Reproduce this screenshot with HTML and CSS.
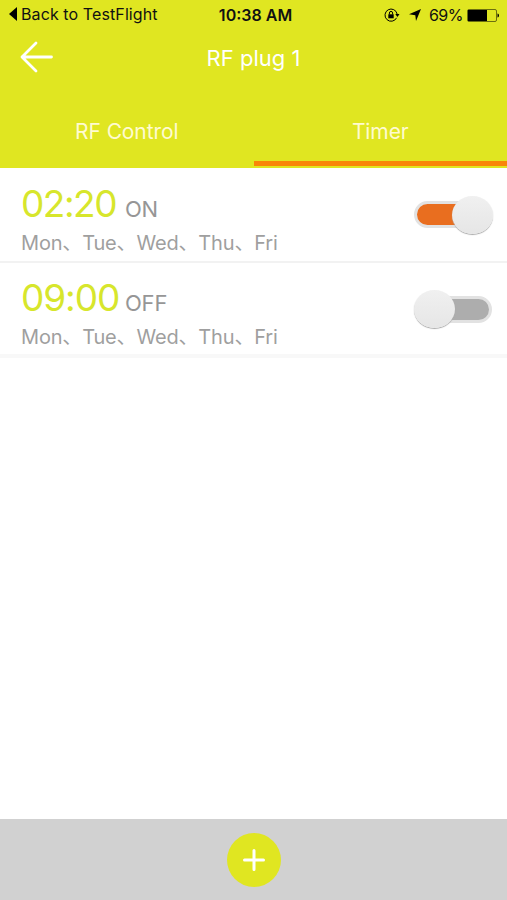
FILE: index.html
```html
<!DOCTYPE html>
<html lang="en">
<head>
    <meta charset="UTF-8">
    <meta name="viewport" content="width=device-width, initial-scale=1.0">
    <title>RF plug 1</title>
    <link rel="stylesheet" href="styles.css">
</head>
<body>
    <header>
        <div class="status">
            <div class="status-left">
                <svg width="8" height="14" viewBox="0 0 8 14"><path d="M8 0v14L0 7z"/></svg>
                <span class="back-app">Back to TestFlight</span>
            </div>
            <span class="clock">10:38 AM</span>
            <div class="status-right">
                <svg class="lock" width="16" height="14" viewBox="0 0 16 14">
                    <path d="M12.6 9.8A6.1 6.1 0 1 1 13.1 6" fill="none" stroke="#000" stroke-width="1"/>
                    <path d="M11.3 6h4.2l-2.1 2.9z"/>
                    <path d="M4.3 6.3h5.4v4H4.3z"/>
                    <path d="M5.4 6.5V5a1.6 1.6 0 0 1 3.2 0v1.5" fill="none" stroke="#000" stroke-width="1"/>
                </svg>
                <svg class="location" width="12" height="12" viewBox="0 0 12 12"><path d="M12 0L7 12L6.3 6.2L0 5.3z"/></svg>
                <span class="percent">69%</span>
                <svg width="33" height="13" viewBox="0 0 33 13">
                    <rect x=".5" y=".5" width="29" height="12" rx="1.5" fill="none" stroke="#000" stroke-opacity=".65" stroke-width=".8"/>
                    <path d="M1 1h19v11H1z"/>
                    <path d="M30.5 4.5c2 .3 2 3.7 0 4z"/>
                </svg>
            </div>
        </div>
        <div class="navbar">
            <svg class="back" width="34" height="32" viewBox="0 0 34 32"><path d="M31.5 16H2M16 2L2 16l14 14" fill="none" stroke="#fff" stroke-width="2.8" stroke-linecap="round" stroke-linejoin="round"/></svg>
            <h1>RF plug 1</h1>
        </div>
        <nav class="tabs">
            <div class="tab control">RF Control</div>
            <div class="tab active">Timer</div>
        </nav>
    </header>

    <main>
        <div class="timer">
            <div class="info">
                <p class="time-row"><span class="time on-time">02:20</span><span class="state">ON</span></p>
                <p class="days">Mon、Tue、Wed、Thu、Fri</p>
            </div>
            <div class="switch on"><div class="track"></div><div class="knob"></div></div>
        </div>
        <div class="timer last">
            <div class="info">
                <p class="time-row"><span class="time off-time">09:00</span><span class="state">OFF</span></p>
                <p class="days">Mon、Tue、Wed、Thu、Fri</p>
            </div>
            <div class="switch"><div class="track"></div><div class="knob"></div></div>
        </div>
    </main>

    <footer>
        <div class="add">
            <svg width="22" height="22" viewBox="0 0 22 22"><path d="M11 1.5v19M1.5 11h19" stroke="#fff" stroke-width="3" stroke-linecap="round"/></svg>
        </div>
    </footer>
</body>
</html>
```

FILE: styles.css
```css
* {
    box-sizing: border-box;
}
body {
    display: flex;
    flex-direction: column;
    height: 900px;
    margin: 0;
    background: #fff;
    font-family: Inter, "Noto Sans CJK SC", sans-serif;
    overflow: hidden;
}
svg {
    display: block;
    flex: none;
}
h1, p {
    margin: 0;
    font-weight: 400;
}
header {
    height: 168px;
    background: #e0e621;
    color: #fff;
}
.status {
    display: grid;
    grid-template-columns: 1fr auto 1fr;
    align-items: center;
    height: 30px;
    padding: 0 7px 0 9px;
    color: #111;
    font-size: 16px;
    line-height: 30px;
    white-space: nowrap;
}
.status-left, .status-right {
    display: flex;
    align-items: center;
}
.status-left {
    gap: 4px;
    margin-top: -2px;
}
.status-right {
    justify-content: flex-end;
}
.back-app {
    letter-spacing: 0.1px;
}
.clock {
    padding-left: 2px;
    font-weight: 600;
}
.location {
    margin: 0 8px 0 9px;
}
.percent {
    margin-right: 4px;
    font-size: 16px;
    letter-spacing: -0.5px;
}
.navbar {
    display: grid;
    grid-template-columns: 1fr auto 1fr;
    align-items: center;
    height: 54px;
    padding: 0 20px;
}
h1 {
    font-size: 22px;
    line-height: 30px;
    padding-top: 2px;
}
.tabs {
    display: flex;
    height: 84px;
}
.tab {
    flex: 1;
    height: 82px;
    padding-top: 33px;
    font-size: 21px;
    letter-spacing: -0.1px;
    line-height: 30px;
    text-align: center;
    color: #fffbd0;
}
.active {
    border-bottom: 5px solid #f98508;
}
main {
    flex: 1;
}
.timer {
    display: flex;
    justify-content: space-between;
    height: 95px;
    padding: 0 15px 0 21px;
    border-bottom: 2px solid #f2f2f2;
}
.last {
    border-bottom: 4px solid #f8f8f8;
}
.info {
    padding-top: 13px;
    white-space: nowrap;
}
.last .info {
    padding-top: 12px;
}
.time-row {
    display: flex;
    align-items: baseline;
    height: 46px;
    line-height: 46px;
}
.time {
    width: 104px;
    font-size: 37px;
    font-weight: 400;
    color: #d7e62c;
}
.on-time {
    letter-spacing: -1.5px;
}
.off-time {
    letter-spacing: -1.1px;
}
.state {
    font-size: 22px;
    letter-spacing: -0.2px;
    color: #969696;
}
.days {
    font-size: 20px;
    letter-spacing: -0.17px;
    line-height: 32px;
    color: #9f9f9f;
}
.switch {
    display: flex;
    align-items: center;
    width: 78px;
    height: 93px;
}
.last .switch {
    height: 92px;
}
.track {
    flex: none;
    width: 78px;
    height: 27px;
    border: 3px solid #e2e2e2;
    border-radius: 14px;
    background: #adadad;
}
.on .track {
    background: #e96e1f;
}
.knob {
    flex: none;
    width: 41px;
    height: 38px;
    margin-left: -78px;
    border-radius: 50%;
    background: linear-gradient(#f0f0f0, #e6e6e6);
    box-shadow: 0 1px 1px #aaa;
}
.on .knob {
    margin-left: -40px;
}
footer {
    display: flex;
    align-items: center;
    justify-content: center;
    height: 81px;
    background: #d1d1d1;
}
.add {
    display: flex;
    align-items: center;
    justify-content: center;
    width: 54px;
    height: 54px;
    border-radius: 50%;
    background: #e0e621;
}
```
